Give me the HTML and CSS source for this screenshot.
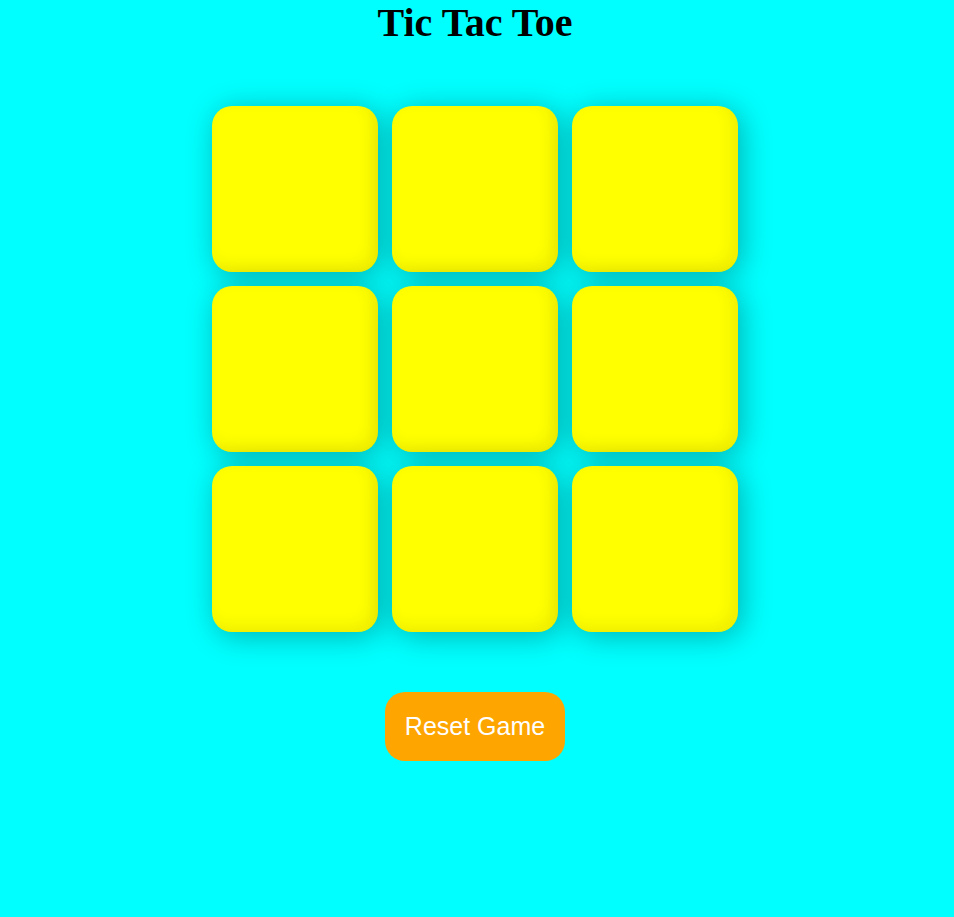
FILE: index.html
```html
<!DOCTYPE html>
<html>
<head>
<meta charset="utf-8">
<title>Tic Tac Toe</title>
<link rel="stylesheet" href="styles.css">
</head>
<body>
<div class="page">
  <h1 class="title">Tic Tac Toe</h1>
  <div class="board">
    <div class="cell"></div>
    <div class="cell"></div>
    <div class="cell"></div>
    <div class="cell"></div>
    <div class="cell"></div>
    <div class="cell"></div>
    <div class="cell"></div>
    <div class="cell"></div>
    <div class="cell"></div>
  </div>
  <button class="reset">Reset Game</button>
</div>
</body>
</html>
```
FILE: styles.css
```css
html, body {
  margin: 0;
  padding: 0;
  background: #00ffff;
}
body {
  height: 917px;
  overflow: hidden;
}
.page {
  display: flex;
  flex-direction: column;
  align-items: center;
  padding-right: 4px;
}
.title {
  font-family: "Liberation Serif", "Times New Roman", serif;
  font-weight: bold;
  font-size: 40px;
  line-height: 46px;
  margin: 0;
  color: #000;
}
.board {
  display: grid;
  grid-template-columns: repeat(3, 166px);
  grid-auto-rows: 166px;
  gap: 14px;
  margin-top: 60px;
}
.cell {
  background: #ffff00;
  border-radius: 20px;
  box-shadow: 4px 4px 30px rgba(0, 0, 0, 0.3), inset -6px -6px 16px rgba(0, 0, 0, 0.07);
}
.reset {
  margin-top: 60px;
  background: #ffa500;
  color: #fff;
  border: none;
  border-radius: 20px;
  font-family: "Liberation Sans", Arial, sans-serif;
  font-size: 25px;
  line-height: 29px;
  padding: 20px 10px;
  width: 180px;
  cursor: pointer;
}
```
